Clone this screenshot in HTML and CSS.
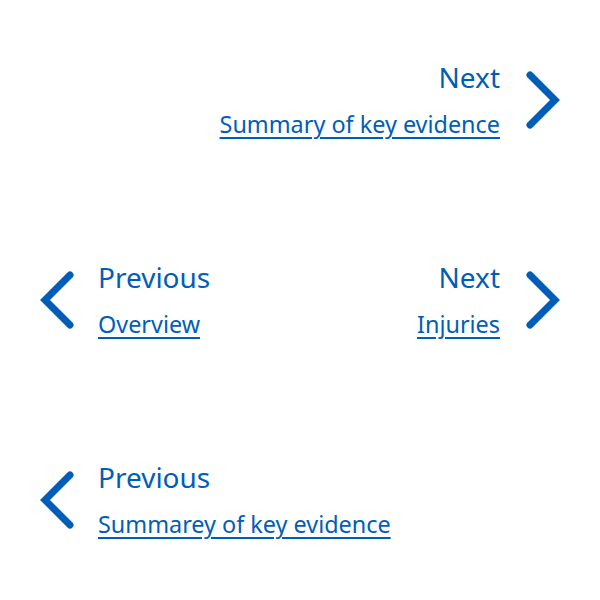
FILE: index.html
```html
<!DOCTYPE html>
<html lang="en">
<head>
    <meta charset="UTF-8">
    <title>Pagination</title>
    <link rel="stylesheet" href="styles.css">
</head>
<body>
    <nav class="pagination">
        <div class="pagination-item pagination-next">
            <a class="pagination-text" href="#">
                <span class="pagination-title">Next</span>
                <span class="pagination-page">Summary of key evidence</span>
            </a>
            <svg class="pagination-icon" viewBox="0 0 34 58" width="34" height="58" aria-hidden="true">
                <path d="M4 4 L29 29 L4 54" />
            </svg>
        </div>
    </nav>

    <nav class="pagination">
        <div class="pagination-item pagination-prev">
            <svg class="pagination-icon" viewBox="0 0 34 58" width="34" height="58" aria-hidden="true">
                <path d="M30 4 L5 29 L30 54" />
            </svg>
            <a class="pagination-text" href="#">
                <span class="pagination-title">Previous</span>
                <span class="pagination-page">Overview</span>
            </a>
        </div>
        <div class="pagination-item pagination-next">
            <a class="pagination-text" href="#">
                <span class="pagination-title">Next</span>
                <span class="pagination-page">Injuries</span>
            </a>
            <svg class="pagination-icon" viewBox="0 0 34 58" width="34" height="58" aria-hidden="true">
                <path d="M4 4 L29 29 L4 54" />
            </svg>
        </div>
    </nav>

    <nav class="pagination">
        <div class="pagination-item pagination-prev">
            <svg class="pagination-icon" viewBox="0 0 34 58" width="34" height="58" aria-hidden="true">
                <path d="M30 4 L5 29 L30 54" />
            </svg>
            <a class="pagination-text" href="#">
                <span class="pagination-title">Previous</span>
                <span class="pagination-page">Summarey of key evidence</span>
            </a>
        </div>
    </nav>
</body>
</html>
```

FILE: styles.css
```css
body {
    margin: 0;
    background: #fff;
    font-family: 'Noto Sans', 'Open Sans', Arial, sans-serif;
    color: #005eb8;
}

.pagination {
    height: 200px;
    padding: 0 40px;
    display: flex;
    align-items: center;
}

.pagination-item {
    display: flex;
    align-items: center;
}

.pagination-prev {
    gap: 24px;
}

.pagination-next {
    margin-left: auto;
    gap: 26px;
}

.pagination-text {
    display: flex;
    flex-direction: column;
    color: #005eb8;
    text-decoration: none;
}

.pagination-next .pagination-text {
    align-items: flex-end;
    text-align: right;
}

.pagination-prev .pagination-text {
    align-items: flex-start;
}

.pagination-title {
    font-size: 28px;
    line-height: 34px;
    margin-bottom: 14px;
}

.pagination-page {
    font-size: 23.4px;
    line-height: 32px;
    text-decoration: underline;
    text-decoration-thickness: 2px;
    text-underline-offset: 4px;
}

.pagination-icon {
    flex: none;
}

.pagination-icon path {
    fill: none;
    stroke: #005eb8;
    stroke-width: 7;
    stroke-linecap: round;
    stroke-linejoin: miter;
}
```
